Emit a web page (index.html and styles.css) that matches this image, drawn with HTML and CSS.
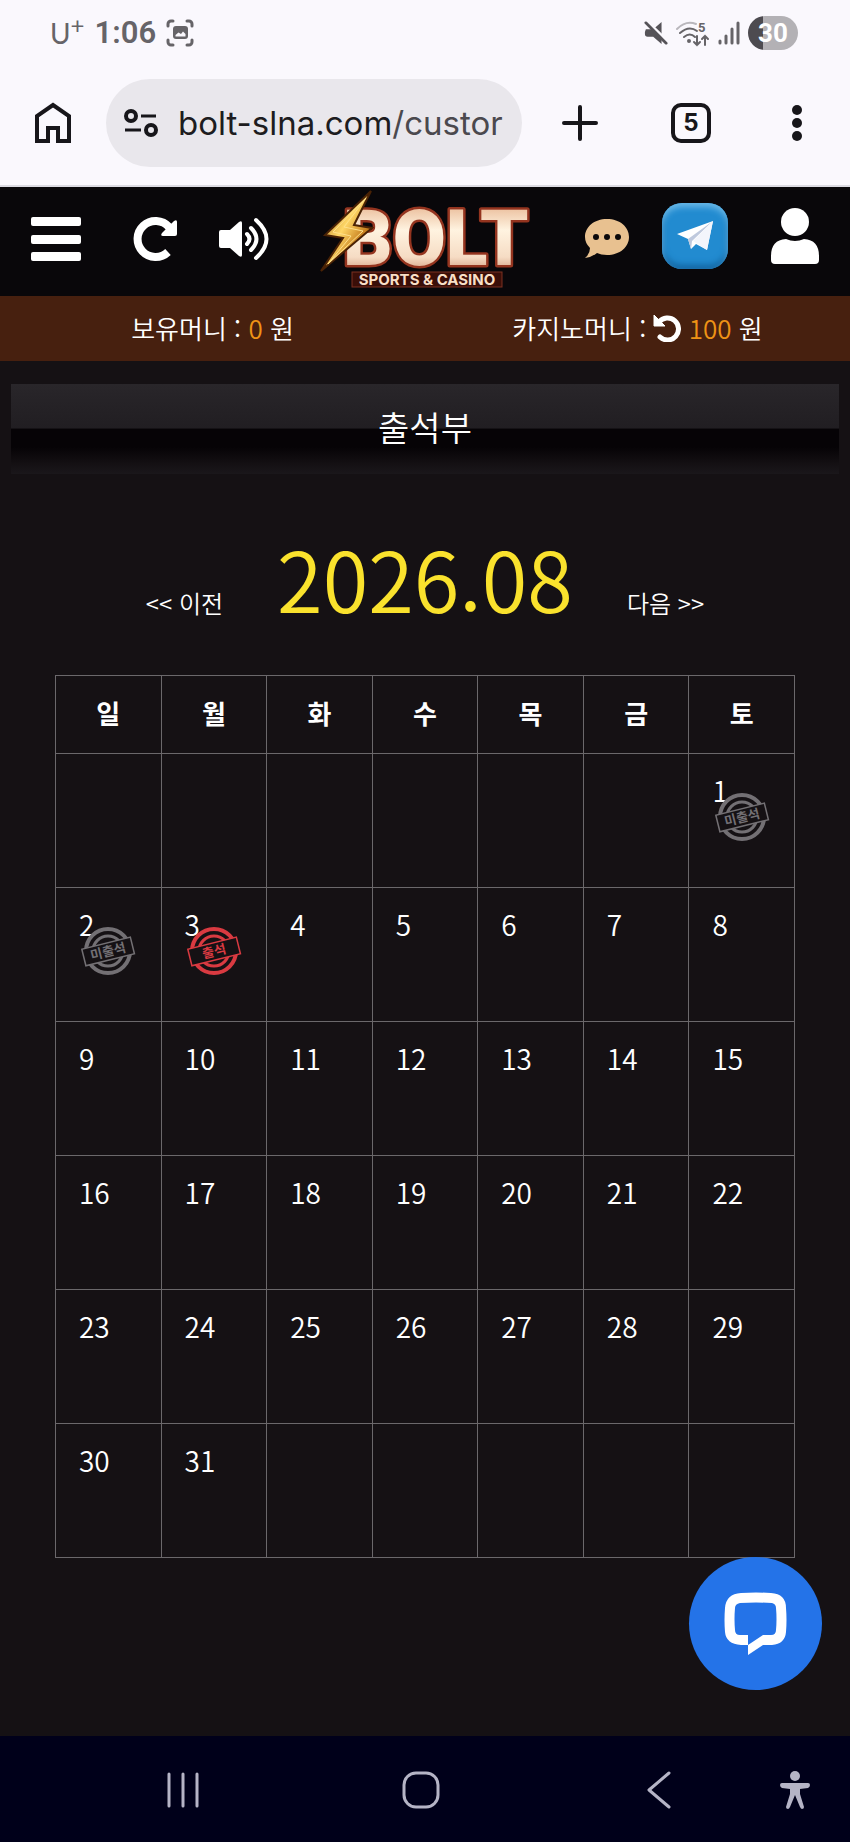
FILE: index.html
```html
<!DOCTYPE html>
<html lang="ko">
<head>
    <meta charset="UTF-8">
    <meta name="viewport" content="width=device-width, initial-scale=1.0">
    <title>출석부</title>
    <link rel="stylesheet" href="styles.css">
</head>
<body>
    <!-- 상태 표시줄 -->
    <div class="status-bar">
        <div class="status-left">
            <span class="carrier">U<sup>+</sup></span>
            <span class="clock">1:06</span>
            <svg width="28" height="28" viewBox="0 0 28 28" fill="none" stroke="#666468" stroke-width="3" stroke-linecap="round">
                <path d="M2 7V5a3 3 0 0 1 3-3h2M21 2h2a3 3 0 0 1 3 3v2M26 21v2a3 3 0 0 1-3 3h-2M7 26H5a3 3 0 0 1-3-3v-2"/>
                <rect x="7" y="7" width="15" height="13" rx="3" fill="#666468" stroke="none"/>
                <path d="M9.500 17.500V16l3-2.500 2.500 1.500 2-2.500 2.500 2.500v2.500z" fill="#faf8fd" stroke="none"/>
            </svg>
        </div>
        <div class="status-right">
            <svg width="24" height="24" viewBox="0 0 26 26" fill="#555358">
                <path d="M2 9h8l9-8v24l-9-8H4a3 3 0 0 1-3-3v-2z"/>
                <path d="M2-1L27 23" stroke="#faf8fd" stroke-width="3"/>
                <path d="M2 2L24 24" stroke="#555358" stroke-width="3" stroke-linecap="round"/>
            </svg>
            <svg width="34" height="28" viewBox="0 0 34 28" fill="none" stroke="#666468" stroke-width="2" stroke-linecap="round">
                <path d="M1 10Q10 1 20 5" stroke="#b9b7bc"/>
                <path d="M4 14q9-8 17-2M8 18q6-5 11 0"/>
                <circle cx="13" cy="22" r="1" fill="#666468"/>
                <path d="M21 17v9M18 23l3 3 3-3M29 26v-9M26 20l3-3 3 3"/>
                <text x="22" y="13" font-family="Roboto" font-size="13" font-weight="700" fill="#666468" stroke="none">5</text>
            </svg>
            <svg width="22" height="24" viewBox="0 0 22 24" stroke="#666468" stroke-width="3" stroke-linecap="round">
                <path d="M2 20v2M8 15v7M14 8v14M20 2v20"/>
            </svg>
            <span class="battery">30</span>
        </div>
    </div>

    <!-- 브라우저 주소창 -->
    <div class="browser-bar">
        <button aria-label="홈">
            <svg width="38" height="42" viewBox="0 0 38 42" fill="none" stroke="#17161a" stroke-width="4">
                <path d="M3 39V14L19 3l16 11v25H24V26H14v13z"/>
            </svg>
        </button>
        <div class="address">
            <svg width="34" height="30" viewBox="0 0 34 30" fill="none" stroke="#17161a" stroke-width="4">
                <circle cx="7" cy="8" r="5"/>
                <circle cx="27" cy="22" r="5"/>
                <path d="M17 8h15M1 22h16" stroke-width="3"/>
            </svg>
            <span class="url">bolt-slna.com<span class="path">/custor</span></span>
        </div>
        <button aria-label="새 탭">
            <svg width="36" height="36" viewBox="0 0 36 36" stroke="#17161a" stroke-width="4" stroke-linecap="round">
                <path d="M18 2v32M2 18h32"/>
            </svg>
        </button>
        <button aria-label="탭 목록"><span class="tab-count">5</span></button>
        <button aria-label="메뉴">
            <svg width="10" height="38" viewBox="0 0 10 38" fill="#17161a">
                <circle cx="5" cy="6" r="5"/>
                <circle cx="5" cy="19" r="5"/>
                <circle cx="5" cy="32" r="5"/>
            </svg>
        </button>
    </div>

    <!-- 사이트 상단 -->
    <header class="site-header">
        <button aria-label="전체 메뉴">
            <svg width="52" height="46" viewBox="0 0 52 46" fill="#fff">
                <rect x="1" y="1" width="50" height="9" rx="2"/>
                <rect x="1" y="19" width="50" height="9" rx="2"/>
                <rect x="1" y="36" width="50" height="9" rx="2"/>
            </svg>
        </button>
        <button aria-label="새로고침">
            <svg width="46" height="46" viewBox="0 0 46 46">
                <path d="M35 36A18 18 0 1 1 36 11" fill="none" stroke="#fff" stroke-width="8"/>
                <path d="M41 5q3-2 3 1v12q0 2-2 2H30q-3 0-1-3z" fill="#fff"/>
            </svg>
        </button>
        <button aria-label="소리">
            <svg width="52" height="44" viewBox="0 0 52 44" fill="none" stroke="#fff" stroke-width="4" stroke-linecap="round">
                <path d="M3 13h9l9-8q3-2 3 1v32q0 3-3 1l-9-8H3q-2 0-2-2V15q0-2 2-2z" fill="#fff" stroke="none"/>
                <path d="M29 17q5 5 0 10M33 11q11 11 0 22M38 3q21 19 0 38"/>
            </svg>
        </button>
        <a class="logo" href="#" aria-label="BOLT SPORTS &amp; CASINO">
            <svg width="216" height="102" viewBox="0 0 216 102">
                <defs>
                    <linearGradient id="cream" x1="0" y1="0" x2="0" y2="1">
                        <stop offset="0" stop-color="#e0a278"/>
                        <stop offset="0.4" stop-color="#fff3e0"/>
                        <stop offset="0.7" stop-color="#f6dcc4"/>
                        <stop offset="1" stop-color="#b86f50"/>
                    </linearGradient>
                    <linearGradient id="gold" x1="0" y1="0" x2="1" y2="1">
                        <stop offset="0" stop-color="#8a4d0c"/>
                        <stop offset="0.45" stop-color="#ffd766"/>
                        <stop offset="0.7" stop-color="#c47a1c"/>
                        <stop offset="1" stop-color="#6d3606"/>
                    </linearGradient>
                </defs>
                <text class="logo-word" x="25" y="77" fill="url(#cream)">BOLT</text>
                <path d="M53 3L7 47l18 3L3 83l51-43-18-3z" fill="url(#gold)" stroke="#4a2205" stroke-width="2"/>
                <path d="M48 10L15 44l18 4L10 76l35-33-19-4z" fill="none" stroke="#ffe08a" stroke-width="1"/>
                <rect x="34" y="84" width="150" height="15" fill="#3a0e08" stroke="#7c3120"/>
                <text class="logo-sub" x="109" y="97" text-anchor="middle">SPORTS &amp; CASINO</text>
            </svg>
        </a>
        <button aria-label="쪽지">
            <svg width="46" height="42" viewBox="0 0 46 42">
                <path d="M23 1c13 0 22 8 22 18s-9 18-22 18q-6 0-10-2-5 4-12 5 5-4 5-10-5-5-5-11C1 9 10 1 23 1z" fill="#e8c190"/>
                <g fill="#0a080a">
                    <circle cx="12" cy="19" r="3"/>
                    <circle cx="23" cy="19" r="3"/>
                    <circle cx="34" cy="19" r="3"/>
                </g>
            </svg>
        </button>
        <button class="telegram raised" aria-label="텔레그램">
            <svg width="38" height="34" viewBox="0 0 38 34">
                <path d="M1 15L37 2l-6 29-11-6-5 5-3-10z" fill="#fff"/>
                <path d="M12 20L37 2 16 22l-1 8z" fill="#bfc9dd"/>
                <path d="M37 2L17 22l14 9z" fill="#f3f5fb"/>
            </svg>
        </button>
        <button class="raised" aria-label="내 정보">
            <svg width="50" height="58" viewBox="0 0 50 58" fill="#fff">
                <circle cx="25" cy="15" r="14"/>
                <path d="M16 32q9 4 18 0 15 1 15 17v4q0 4-4 4H5q-4 0-4-4v-4q0-16 15-17z"/>
            </svg>
        </button>
    </header>

    <div class="money-bar">
        <div>보유머니 : <span class="amount">0</span> 원</div>
        <div>카지노머니 :
            <svg width="28" height="28" viewBox="0 0 28 28">
                <path d="M6 8a11 11 0 1 1 1 15" fill="none" stroke="#fff" stroke-width="5" stroke-linecap="round"/>
                <path d="M1 1v11h11z" fill="#fff" stroke="#fff"/>
            </svg>
            <span class="amount">100</span> 원</div>
    </div>

    <main>
        <h1>출석부</h1>

        <div class="month-nav">
            <a href="#">&lt;&lt; 이전</a>
            <span class="month">2026.08</span>
            <a href="#">다음 &gt;&gt;</a>
        </div>

        <table class="calendar">
            <thead>
                <tr><th>일</th><th>월</th><th>화</th><th>수</th><th>목</th><th>금</th><th>토</th></tr>
            </thead>
            <tbody>
                <tr>
                    <td></td><td></td><td></td><td></td><td></td><td></td>
                    <td>1
                        <svg class="stamp absent" viewBox="0 0 56 50"><use href="#ring"/><text x="28" y="30" transform="rotate(-14 28 25)">미출석</text></svg>
                    </td>
                </tr>
                <tr>
                    <td>2
                        <svg class="stamp absent" viewBox="0 0 56 50"><use href="#ring"/><text x="28" y="30" transform="rotate(-14 28 25)">미출석</text></svg>
                    </td>
                    <td>3
                        <svg class="stamp present" viewBox="0 0 56 50"><use href="#ring"/><text x="28" y="30" transform="rotate(-14 28 25)">출석</text></svg>
                    </td>
                    <td>4</td><td>5</td><td>6</td><td>7</td><td>8</td>
                </tr>
                <tr><td>9</td><td>10</td><td>11</td><td>12</td><td>13</td><td>14</td><td>15</td></tr>
                <tr><td>16</td><td>17</td><td>18</td><td>19</td><td>20</td><td>21</td><td>22</td></tr>
                <tr><td>23</td><td>24</td><td>25</td><td>26</td><td>27</td><td>28</td><td>29</td></tr>
                <tr><td>30</td><td>31</td><td></td><td></td><td></td><td></td><td></td></tr>
            </tbody>
        </table>

        <button class="chat-button" aria-label="채팅 상담">
            <svg width="64" height="64" viewBox="0 0 64 64">
                <path fill="#fff" fill-rule="evenodd" d="M17 1Q32 0 47 1 62 2 62 16q1 12 0 24-1 12-14 13h-9L24 63V43h-8q-5 0-5-5-1-11 0-22 0-4 5-5 16-1 32 0 4 1 4 5 1 11 0 22 0 5-5 5h-8L24 53h-7Q2 52 1 40q-1-12 0-24Q2 2 17 1z"/>
            </svg>
        </button>
    </main>

    <!-- 하단 내비게이션 -->
    <nav class="system-nav">
        <button aria-label="최근 앱">
            <svg width="34" height="38" viewBox="0 0 34 38"><path d="M3 3v32M17 3v32M31 3v32"/></svg>
        </button>
        <button aria-label="홈 화면">
            <svg width="38" height="38" viewBox="0 0 38 38"><rect x="2" y="2" width="34" height="34" rx="12"/></svg>
        </button>
        <button aria-label="뒤로">
            <svg width="26" height="38" viewBox="0 0 26 38"><path d="M23 2L3 19l20 17"/></svg>
        </button>
        <button aria-label="접근성">
            <svg class="solid" width="32" height="40" viewBox="0 0 32 40">
                <circle cx="16" cy="6" r="5"/>
                <path d="M3 13h26q2 0 2 2t-2 3l-8 1v5l4 13q0 2-2 2-1 0-2-2l-5-12-5 12q-1 2-2 2-2 0-2-2l4-13v-5l-8-1q-2-1-2-3t2-2z"/>
            </svg>
        </button>
    </nav>

    <!-- 도장 모양 -->
    <svg class="shapes" aria-hidden="true">
        <symbol id="ring" viewBox="0 0 56 50">
            <circle cx="28" cy="25" r="22" fill="none" stroke="currentColor" stroke-width="4"/>
            <circle cx="28" cy="25" r="15" fill="none" stroke="currentColor" stroke-width="3"/>
            <rect x="3" y="17" width="50" height="17" fill="#151114" stroke="currentColor" stroke-width="1.500" transform="rotate(-14 28 25)"/>
        </symbol>
    </svg>
</body>
</html>
```
FILE: styles.css
```css
* {
    box-sizing: border-box;
}

body {
    margin: 0;
    min-height: 100vh;
    display: flex;
    flex-direction: column;
    background-color: #151114;
    color: #fff;
    font-family: "Noto Sans CJK KR", sans-serif;
    font-weight: 350;
}

button {
    display: flex;
    align-items: center;
    justify-content: center;
    padding: 0;
    border: none;
    background: none;
    cursor: pointer;
}

a {
    color: inherit;
    text-decoration: none;
}

svg {
    display: block;
}

/* 상태 표시줄 */
.status-bar {
    display: flex;
    justify-content: space-between;
    align-items: center;
    height: 66px;
    padding: 0 52px 0 50px;
    background-color: #faf8fd;
    color: #666468;
}

.status-left,
.status-right {
    display: flex;
    align-items: center;
}

.status-left {
    gap: 10px;
}

.carrier {
    font-family: Lato, sans-serif;
    font-size: 28px;
    font-weight: 400;
    line-height: 32px;
}

.carrier sup {
    font-size: 24px;
    line-height: 0;
}

.clock {
    font-family: Roboto, sans-serif;
    font-size: 31px;
    font-weight: 600;
    line-height: 32px;
}

.status-right {
    gap: 8px;
}

.battery {
    width: 50px;
    border-radius: 17px;
    background: linear-gradient(90deg, #4d4b50 30%, #b3b1b5 30%);
    color: #fff;
    font-family: Roboto, sans-serif;
    font-size: 26px;
    font-weight: 700;
    line-height: 34px;
    text-align: center;
}

/* 주소창 */
.browser-bar {
    display: grid;
    grid-template-columns: 106px 1fr 116px 106px 106px;
    height: 121px;
    padding: 13px 0 18px;
    border-bottom: 2px solid #dcdbe2;
    background-color: #faf8fd;
}

.address {
    display: flex;
    align-items: center;
    gap: 20px;
    min-width: 0;
    padding: 0 12px 0 18px;
    border-radius: 44px;
    background-color: #e9e7ec;
}

.address svg {
    flex: none;
}

.url {
    overflow: hidden;
    color: #1d1c20;
    font-family: Inter, sans-serif;
    font-size: 33px;
    font-weight: 400;
    line-height: 44px;
    white-space: nowrap;
}

.url .path {
    color: #4b494e;
}

.tab-count {
    width: 40px;
    border: 4px solid #17161a;
    border-radius: 10px;
    color: #17161a;
    font-family: Inter, sans-serif;
    font-size: 24px;
    font-weight: 700;
    line-height: 32px;
}

/* 사이트 상단 */
.site-header {
    display: grid;
    grid-template-columns: 99fr 100fr 77fr 288fr 73fr 104fr 96fr;
    align-items: center;
    height: 109px;
    padding: 0 7px 5px;
    background-color: #09070a;
}

.raised {
    margin-bottom: 6px;
}

.logo {
    justify-self: center;
}

.logo-word {
    font-family: Roboto, sans-serif;
    font-size: 77px;
    font-weight: 900;
    stroke: #94341f;
    stroke-width: 5px;
    stroke-linejoin: round;
    paint-order: stroke;
}

.logo-sub {
    fill: #f8dfc6;
    font-family: Inter, sans-serif;
    font-size: 15px;
    font-weight: 700;
}

.telegram {
    justify-self: center;
    width: 66px;
    height: 66px;
    border-radius: 20px;
    background-color: #228bd0;
    box-shadow: inset 0 4px 6px #6bb9e8, inset 0 -4px 6px #12639f;
}

.money-bar {
    display: grid;
    grid-template-columns: 1fr 1fr;
    padding-bottom: 2px;
    background-color: #47200f;
    font-size: 26px;
    line-height: 63px;
    text-align: center;
}

.money-bar svg {
    display: inline-block;
    vertical-align: -3px;
}

.amount {
    color: #ee9316;
}

/* 출석부 */
main {
    position: relative;
    flex: 1;
    padding: 23px 11px 176px;
}

h1 {
    margin: 0;
    padding-bottom: 4px;
    background: linear-gradient(#29262a, #211e22 49%, #060306 50%, #060306 70%, #151114 90%, #1a171b);
    font-size: 34px;
    font-weight: 350;
    line-height: 86px;
    text-align: center;
}

.month-nav {
    display: flex;
    align-items: baseline;
    justify-content: center;
    gap: 54px;
    margin: 43px 0 38px;
    font-size: 24px;
}

.month {
    color: #fae22d;
    font-size: 83px;
    line-height: 120px;
}

.calendar {
    width: calc(100% - 88px);
    margin: 0 auto;
    border-collapse: collapse;
    table-layout: fixed;
}

.calendar th,
.calendar td {
    border: 1px solid #6b686b;
}

.calendar th {
    height: 78px;
    padding: 0 0 4px;
    font-size: 26px;
    font-weight: 700;
}

.calendar td {
    position: relative;
    height: 134px;
    padding: 20px 0 0 23px;
    font-size: 28px;
    line-height: 32px;
    vertical-align: top;
}

.stamp {
    position: absolute;
    top: 38px;
    left: 50%;
    width: 56px;
    height: 50px;
    margin-left: -28px;
}

.stamp text {
    fill: currentColor;
    font-size: 13px;
    font-weight: 700;
    text-anchor: middle;
}

.absent {
    color: #737074;
}

.present {
    color: #d93a41;
}

.chat-button {
    position: absolute;
    right: 28px;
    bottom: 46px;
    width: 133px;
    height: 133px;
    border-radius: 50%;
    background-color: #2473e8;
}

/* 하단 내비게이션 */
.system-nav {
    display: grid;
    grid-template-columns: 1fr 1fr 1fr 34px;
    height: 106px;
    padding: 2px 38px 0 64px;
    background-color: #00001a;
}

.system-nav svg {
    fill: none;
    stroke: #b5b4c6;
    stroke-width: 3;
    stroke-linecap: round;
    stroke-linejoin: round;
}

.system-nav .solid {
    fill: #b5b4c6;
    stroke: none;
}

.shapes {
    position: absolute;
    width: 0;
    height: 0;
}
```
